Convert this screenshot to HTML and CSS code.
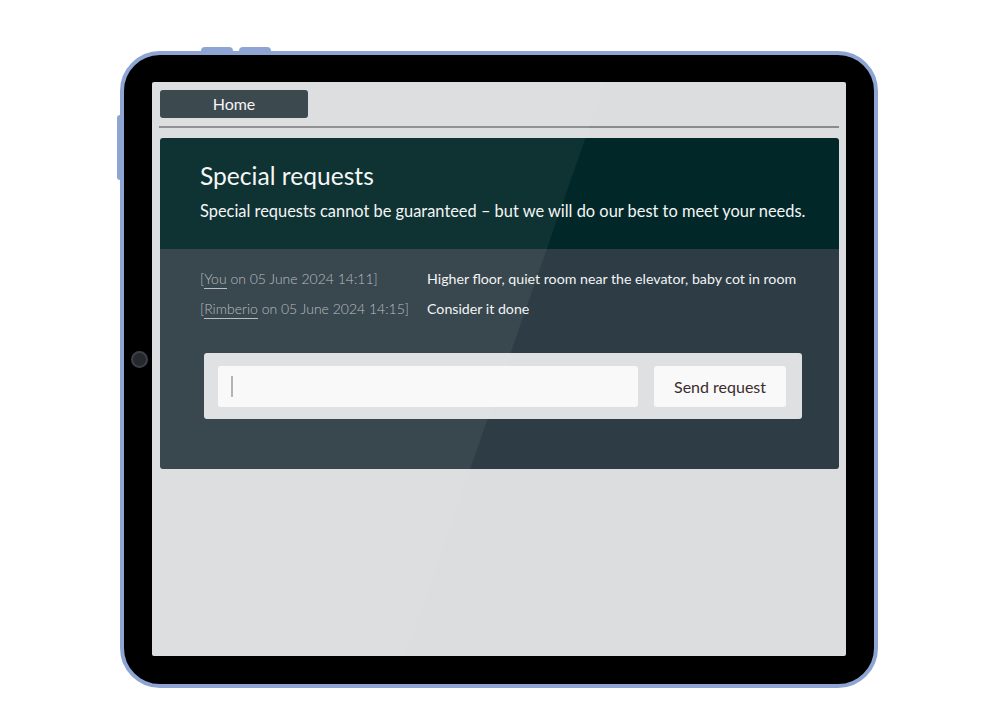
FILE: index.html
```html
<!DOCTYPE html>
<html lang="en">
<head>
  <meta charset="UTF-8" />
  <meta name="viewport" content="width=device-width, initial-scale=1" />
  <title>Special requests</title>
  <link rel="stylesheet" href="styles.css">
</head>
<body>
  <div class="tablet">
    <span class="hw-btn hw-top hw-top-1"></span>
    <span class="hw-btn hw-top hw-top-2"></span>
    <span class="hw-btn hw-side"></span>
    <span class="camera"></span>

    <div class="screen">
      <nav class="topnav">
        <a class="nav-btn" href="#">Home</a>
      </nav>
      <hr class="divider">

      <section class="intro">
        <h1>Special requests</h1>
        <p>Special requests cannot be guaranteed – but we will do our best to meet your needs.</p>
      </section>

      <section class="thread">
        <div class="messages">
          <div class="meta">[<span class="who">You</span> on 05 June 2024 14:11]</div>
          <div class="text">Higher floor, quiet room near the elevator, baby cot in room</div>
          <div class="meta">[<span class="who">Rimberio</span> on 05 June 2024 14:15]</div>
          <div class="text">Consider it done</div>
        </div>

        <form class="request-form">
          <div class="field"><span class="caret"></span></div>
          <button type="button" class="send">Send request</button>
        </form>
      </section>

      <div class="glare"></div>
    </div>
  </div>
</body>
</html>
```

FILE: styles.css
```css
body {
  margin: 0;
  background: #fff;
  font-family: Lato, "Noto Sans", sans-serif;
}
.tablet {
  position: relative;
  width: 694px;
  height: 574px;
  margin: 51px 0 0 120px;
  padding: 27px 28px 28px 28px;
  background: #000;
  border: 4px solid #8ea5d3;
  border-radius: 40px;
}
.hw-btn {
  position: absolute;
  background: #8ea5d3;
}
.hw-top {
  top: -8px;
  width: 32px;
  height: 6px;
  border-radius: 4px 4px 0 0;
}
.hw-top-1 { left: 77px; }
.hw-top-2 { left: 115px; }
.hw-side {
  left: -7px;
  top: 60px;
  width: 5px;
  height: 65px;
  border-radius: 3px 0 0 3px;
}
.camera {
  position: absolute;
  left: 7px;
  top: 296px;
  width: 13px;
  height: 13px;
  border-radius: 50%;
  background: #25282d;
  border: 2px solid #3b3f47;
}
.screen {
  position: relative;
  overflow: hidden;
  height: 100%;
  background: #dcdddf;
  border-radius: 2px;
  padding: 8px 7px 0 8px;
  box-sizing: border-box;
}
.topnav {
  display: flex;
}
.nav-btn {
  display: block;
  width: 148px;
  height: 28px;
  line-height: 28px;
  text-align: center;
  background: #313f45;
  color: #f4f4f4;
  font-size: 16px;
  text-decoration: none;
  border-radius: 3px;
}
.divider {
  margin: 8px 0 10px -1px;
  border: 0;
  height: 2px;
  background: #8b8b8d;
}
.intro {
  background: #022728;
  color: #f4f6f6;
  padding: 23px 20px 27px 40px;
  border-radius: 3px 3px 0 0;
}
.intro h1 {
  margin: 0;
  font-size: 24.6px;
  font-weight: 400;
  line-height: 30px;
}
.intro p {
  margin: 9px 0 0;
  font-size: 16.4px;
  line-height: 22px;
}
.thread {
  background: #2e3d45;
  padding: 20px 40px 50px;
  border-radius: 0 0 3px 3px;
}
.messages {
  display: grid;
  grid-template-columns: 227px auto;
  row-gap: 10px;
  font-size: 14px;
  line-height: 20px;
}
.meta {
  color: #b4bbbf;
  font-weight: 300;
}
.who {
  border-bottom: 1px solid #b4bbbf;
  padding-bottom: 1px;
}
.text {
  color: #f2f4f5;
  font-size: 14.2px;
}
.request-form {
  display: flex;
  gap: 16px;
  width: 598px;
  box-sizing: border-box;
  margin: 34px 0 0 4px;
  padding: 13px 16px 12px 14px;
  background: #dfe0e2;
  border-radius: 3px;
}
.field {
  flex: 1;
  height: 41px;
  background: #f9f9f9;
  border-radius: 3px;
  display: flex;
  align-items: center;
  padding-left: 13px;
}
.caret {
  width: 2px;
  height: 21px;
  background: #b0b0b0;
}
.send {
  width: 132px;
  height: 41px;
  border: 0;
  border-radius: 3px;
  background: #f9f9f9;
  color: #3a2d2d;
  font-family: inherit;
  font-size: 16px;
}
.glare {
  position: absolute;
  inset: 0;
  background: rgba(255, 255, 255, 0.055);
  clip-path: polygon(0 0, 453px 0, 253px 100%, 0 100%);
  pointer-events: none;
}
```
